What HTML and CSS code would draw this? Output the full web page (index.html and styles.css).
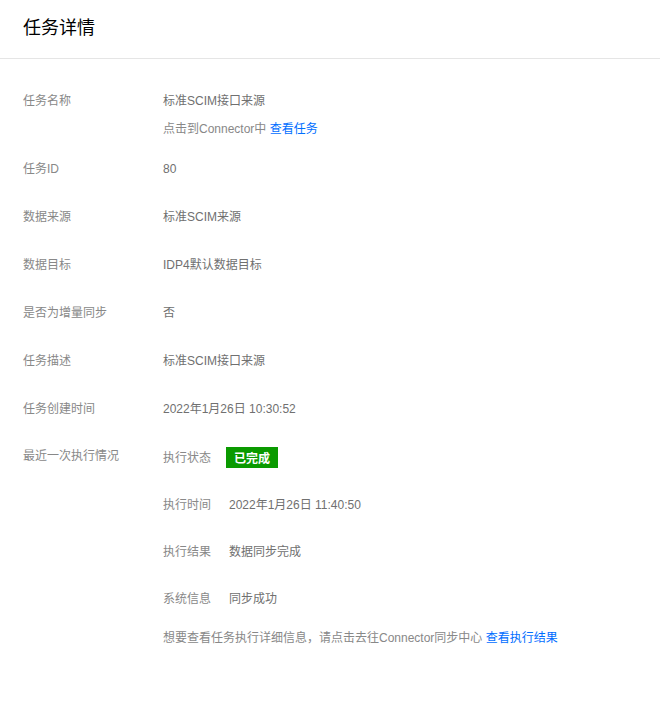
FILE: index.html
```html
<!DOCTYPE html>
<html lang="zh-CN">
<head>
<meta charset="utf-8">
<title>任务详情</title>
<link rel="stylesheet" href="styles.css">
</head>
<body>
<div class="page">
  <header class="header">
    <h1 class="title">任务详情</h1>
  </header>
  <main class="content">
    <div class="row">
      <div class="label">任务名称</div>
      <div class="value">
        <div class="line">标准SCIM接口来源</div>
        <div class="line sub">点击到Connector中 <a class="link" href="#">查看任务</a></div>
      </div>
    </div>
    <div class="row">
      <div class="label">任务ID</div>
      <div class="value"><div class="line">80</div></div>
    </div>
    <div class="row">
      <div class="label">数据来源</div>
      <div class="value"><div class="line">标准SCIM来源</div></div>
    </div>
    <div class="row">
      <div class="label">数据目标</div>
      <div class="value"><div class="line">IDP4默认数据目标</div></div>
    </div>
    <div class="row">
      <div class="label">是否为增量同步</div>
      <div class="value"><div class="line">否</div></div>
    </div>
    <div class="row">
      <div class="label">任务描述</div>
      <div class="value"><div class="line">标准SCIM接口来源</div></div>
    </div>
    <div class="row">
      <div class="label">任务创建时间</div>
      <div class="value"><div class="line">2022年1月26日 10:30:52</div></div>
    </div>
    <div class="row row-exec">
      <div class="label">最近一次执行情况</div>
      <div class="value">
        <div class="items">
          <div class="item">
            <span class="item-label">执行状态</span>
            <span class="badge">已完成</span>
          </div>
          <div class="item">
            <span class="item-label">执行时间</span>
            <span class="item-value">2022年1月26日 11:40:50</span>
          </div>
          <div class="item">
            <span class="item-label">执行结果</span>
            <span class="item-value">数据同步完成</span>
          </div>
          <div class="item">
            <span class="item-label">系统信息</span>
            <span class="item-value">同步成功</span>
          </div>
        </div>
        <div class="line note">想要查看任务执行详细信息，请点击去往Connector同步中心 <a class="link" href="#">查看执行结果</a></div>
      </div>
    </div>
  </main>
</div>
</body>
</html>
```

FILE: styles.css
```css
* { box-sizing: border-box; }
html, body {
  margin: 0;
  padding: 0;
  background: #ffffff;
}
body {
  font-family: "Liberation Sans", "Noto Sans CJK SC", sans-serif;
  font-size: 12px;
  color: #707070;
}
.page {
  width: 662px;
}
.header {
  height: 59px;
  border-bottom: 1px solid #e5e5e5;
  padding: 0 0 0 23px;
  display: flex;
  align-items: center;
  margin-right: 2px;
}
.title {
  margin: 0;
  margin-top: -2px;
  font-size: 18px;
  font-weight: normal;
  color: #000000;
  line-height: 26px;
}
.content {
  padding: 32px 23px 0 23px;
  display: flex;
  flex-direction: column;
  gap: 28px;
}
.row {
  display: flex;
  align-items: flex-start;
}
.row-exec {
  margin-top: -1px;
}
.label {
  width: 140px;
  flex: none;
  line-height: 20px;
  color: #888888;
}
.value {
  flex: 1;
  display: flex;
  flex-direction: column;
}
.line {
  line-height: 20px;
  color: #707070;
}
.sub {
  margin-top: 8px;
  margin-bottom: -8px;
  color: #888888;
}
.link {
  color: #006eff;
  text-decoration: none;
}
.items {
  display: flex;
  flex-direction: column;
  gap: 27px;
}
.item {
  display: flex;
  align-items: center;
  height: 20px;
}
.item-label {
  width: 66px;
  flex: none;
  color: #888888;
}
.item-value {
  color: #707070;
}
.badge {
  display: inline-flex;
  align-items: center;
  justify-content: center;
  margin-left: -3px;
  margin-top: 3px;
  height: 21px;
  width: 52px;
  background: #0a9a00;
  color: #ffffff;
  font-weight: bold;
  font-size: 12px;
}
.note {
  margin-top: 21px;
  color: #888888;
}
```
